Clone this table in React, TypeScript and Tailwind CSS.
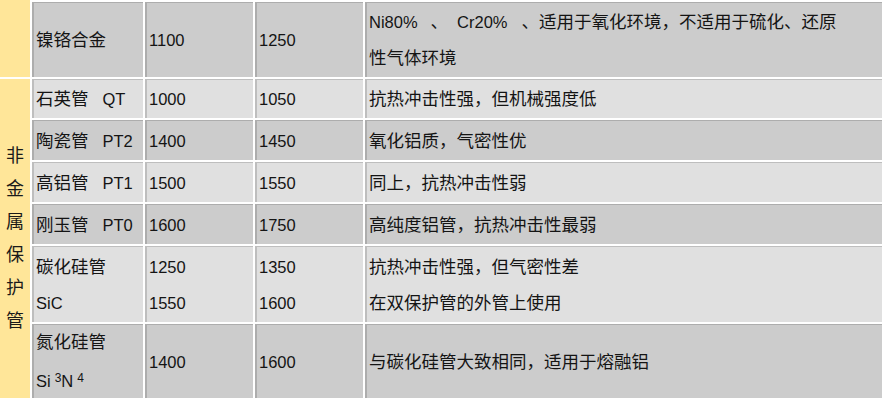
import type { ReactNode } from "react";

type Row = {
  name: ReactNode;
  low: ReactNode;
  high: ReactNode;
  note: ReactNode;
  dark: boolean;
};

// latin text runs a bit smaller than the CJK text in the source
function L({ children, className = "" }: { children: ReactNode; className?: string }) {
  return <span className={`text-[16.5px] ${className}`}>{children}</span>;
}

function Sub({ children }: { children: ReactNode }) {
  return <span className="ml-[4px] text-[12px] align-[5px]">{children}</span>;
}

const rows: Row[] = [
  {
    name: "镍铬合金",
    low: <L>1100</L>,
    high: <L>1250</L>,
    note: (
      <>
        <L>Ni80%</L>
        <span className="ml-[13px]">、</span>
        <L className="ml-[9px]">Cr20%</L>
        <span className="ml-[14px]">、</span>适用于氧化环境，不适用于硫化、还原
        <br />
        性气体环境
      </>
    ),
    dark: true,
  },
  {
    name: (
      <>
        石英管<L className="ml-[14px]">QT</L>
      </>
    ),
    low: <L>1000</L>,
    high: <L>1050</L>,
    note: "抗热冲击性强，但机械强度低",
    dark: false,
  },
  {
    name: (
      <>
        陶瓷管<L className="ml-[14px]">PT2</L>
      </>
    ),
    low: <L>1400</L>,
    high: <L>1450</L>,
    note: "氧化铝质，气密性优",
    dark: true,
  },
  {
    name: (
      <>
        高铝管<L className="ml-[14px]">PT1</L>
      </>
    ),
    low: <L>1500</L>,
    high: <L>1550</L>,
    note: "同上，抗热冲击性弱",
    dark: false,
  },
  {
    name: (
      <>
        刚玉管<L className="ml-[14px]">PT0</L>
      </>
    ),
    low: <L>1600</L>,
    high: <L>1750</L>,
    note: "高纯度铝管，抗热冲击性最弱",
    dark: true,
  },
  {
    name: (
      <>
        碳化硅管
        <br />
        <L>SiC</L>
      </>
    ),
    low: (
      <L>
        1250
        <br />
        1550
      </L>
    ),
    high: (
      <L>
        1350
        <br />
        1600
      </L>
    ),
    note: (
      <>
        抗热冲击性强，但气密性差
        <br />
        在双保护管的外管上使用
      </>
    ),
    dark: false,
  },
  {
    name: (
      <>
        氮化硅管
        <br />
        <L>
          Si<Sub>3</Sub>N<Sub>4</Sub>
        </L>
      </>
    ),
    low: <L>1400</L>,
    high: <L>1600</L>,
    note: "与碳化硅管大致相同，适用于熔融铝",
    dark: true,
  },
];

function Cell({ dark, children }: { dark: boolean; children: ReactNode }) {
  return (
    <div
      className={`flex items-center border-t border-l-2 border-black/15 pl-[2px] leading-[36px] ${
        dark ? "bg-[#cccccc]" : "bg-[#e0e0e0]"
      }`}
    >
      <div>{children}</div>
    </div>
  );
}

export default function App() {
  return (
    <div className="h-[403px] w-[886px] bg-white font-['Liberation_Sans','Noto_Sans_CJK_SC',sans-serif] text-[17.5px] text-[#141414]">
      <div className="grid w-[882px] grid-cols-[30px_111px_108px_108px_517px] grid-rows-[75px_39px_40px_40px_40px_76px_74px] gap-[2px] pt-[2px]">
        <div className="col-start-1 row-start-1 -mt-[2px] bg-[#ffe699]" />
        <div className="col-start-1 row-start-2 row-span-6 flex flex-col items-center justify-center bg-[#ffe699] text-[18px] leading-[33px] text-[#1a1a1a]">
          <span>非</span>
          <span>金</span>
          <span>属</span>
          <span>保</span>
          <span>护</span>
          <span>管</span>
        </div>
        {rows.map((r, i) => (
          <div key={i} className="contents">
            <Cell dark={r.dark}>{r.name}</Cell>
            <Cell dark={r.dark}>{r.low}</Cell>
            <Cell dark={r.dark}>{r.high}</Cell>
            <Cell dark={r.dark}>{r.note}</Cell>
          </div>
        ))}
      </div>
    </div>
  );
}
